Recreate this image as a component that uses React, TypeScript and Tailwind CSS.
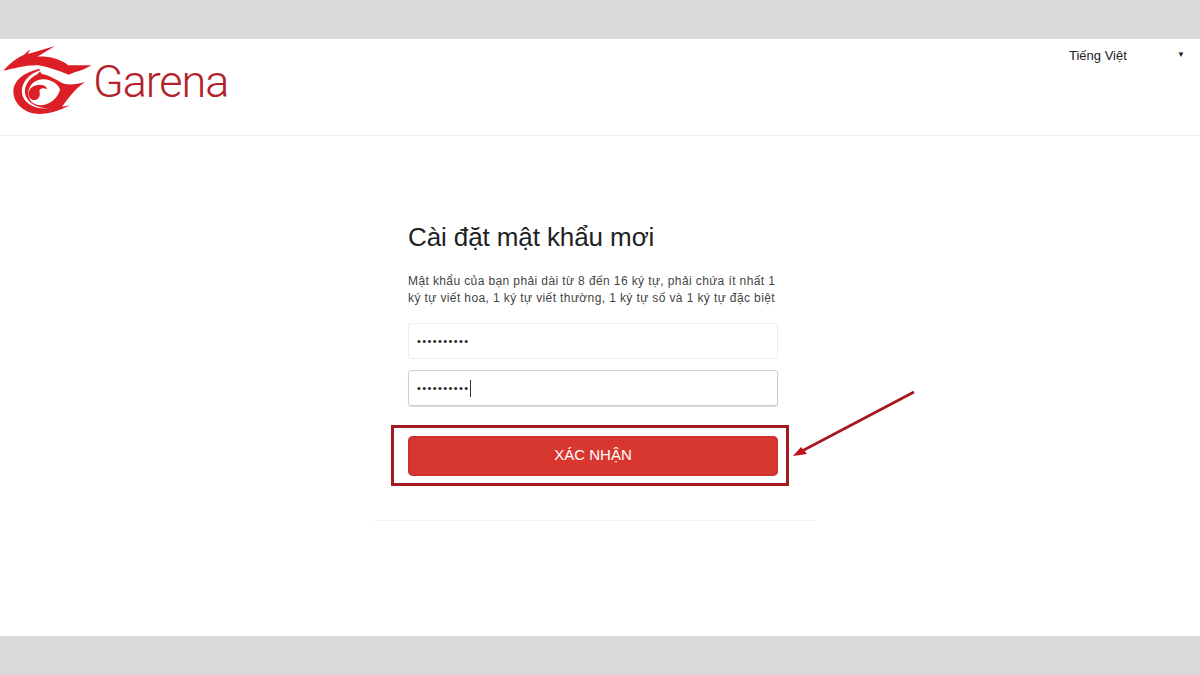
export default function App() {
  return (
    <div className="relative flex h-[675px] w-[1200px] flex-col overflow-hidden bg-white font-['Liberation_Sans',Arial,sans-serif]">
      <div className="h-[39px] bg-[#d9d9d9]" />
      <header className="flex h-[97px] items-start justify-between border-b border-[#eeeeee]">
        <div className="flex items-start pt-[3px]">
          <svg width="96" height="76" viewBox="0 0 288 228" className="block">
            <path fill="#dc1f26" d="M10 86 C28 66 46 50 72 38 L90 22 L84 36 L165 12 L112 44 C140 42 178 48 205 70 L275 70 C258 80 240 88 226 90 L206 98 C180 88 150 76 115 70 C80 68 40 80 10 86 Z" />
            <path fill="#dc1f26" d="M118 80 C70 92 40 116 40 148 C40 186 75 216 118 216 C150 216 180 205 210 190 L186 194 C205 170 225 140 255 120 C230 128 205 130 188 124 C165 112 150 100 125 96 C122 92 120 86 118 80 Z" />
            <path fill="#ffffff" d="M125 83 C85 94 62 124 66 154 C70 184 105 204 150 199 C115 201 80 184 75 154 C72 129 90 107 112 97 Z" />
            <path fill="#ffffff" d="M130 112 C155 112 175 128 180 142 C176 165 150 190 122 190 C100 190 85 175 85 154 C85 130 105 112 130 112 Z" />
            <path fill="#dc1f26" d="M86 156 C86 136 108 124 130 130 C136 132 140 136 142 142 C130 136 120 138 118 146 C122 160 118 174 102 174 C92 174 86 166 86 156 Z" />
          </svg>
          <span className="-ml-[3px] mt-[17px] text-[45px] leading-[46px] font-light tracking-[-1.1px] text-[#b3222a] font-['Roboto',Arial,sans-serif]">Garena</span>
        </div>
        <div className="mr-[15px] flex w-[116px] items-start justify-between pt-[9px] text-[13px] text-[#222222]">
          <span className="leading-[16px]">Tiếng Việt</span>
          <span className="text-[8px] leading-[14px]">▼</span>
        </div>
      </header>
      <main className="flex-1 pl-[408px]">
        <div className="w-[370px]">
          <h1 className="mt-[85px] text-[26px] leading-[32px] font-normal tracking-[-0.1px] whitespace-nowrap text-[#222222]">Cài đặt mật khẩu mơi</h1>
          <p className="mt-[20px] w-[380px] text-[12px] leading-[17px] tracking-[0.39px] text-[#444444]">
            Mật khẩu của bạn phải dài từ 8 đến 16 ký tự, phải chứa ít nhất 1<br />
            ký tự viết hoa, 1 ký tự viết thường, 1 ký tự số và 1 ký tự đặc biệt
          </p>
          <div className="mt-[16px] flex h-[36px] items-center rounded-[3px] border border-[#eeeeee] pl-[8px] text-[11px] tracking-[1.4px] text-[#222222]">••••••••••</div>
          <div className="mt-[11px] flex h-[36px] items-center rounded-[3px] border border-[#cccccc] pl-[8px] text-[11px] tracking-[1.4px] text-[#222222] shadow-[0_1px_1px_#dddddd]">
            ••••••••••<span className="h-[17px] w-px bg-[#333333]" />
          </div>
          <div className="-ml-[17px] -mr-[11px] mt-[19px] border-[3px] border-[#a01a20] pb-[7px] pl-[14px] pr-[8px] pt-[8px]">
            <button className="flex h-[40px] w-full items-center justify-center rounded-[5px] bg-[#d83730] pb-[2px] text-[15px] text-white shadow-[inset_0_0_3px_#a82a24]">XÁC NHẬN</button>
          </div>
          <div className="-ml-[33px] mt-[34px] h-px w-[440px] bg-[#f0f0f0]" />
        </div>
      </main>
      <div className="h-[39px] bg-[#d9d9d9]" />
      <svg className="absolute left-[790px] top-[388px]" width="130" height="72" viewBox="0 0 130 72">
        <path d="M124 4 L12 63" stroke="#a8161e" strokeWidth="2.6" fill="none" />
        <path d="M3 68 L11 59 L17 66 Z" fill="#c01218" />
      </svg>
    </div>
  );
}
